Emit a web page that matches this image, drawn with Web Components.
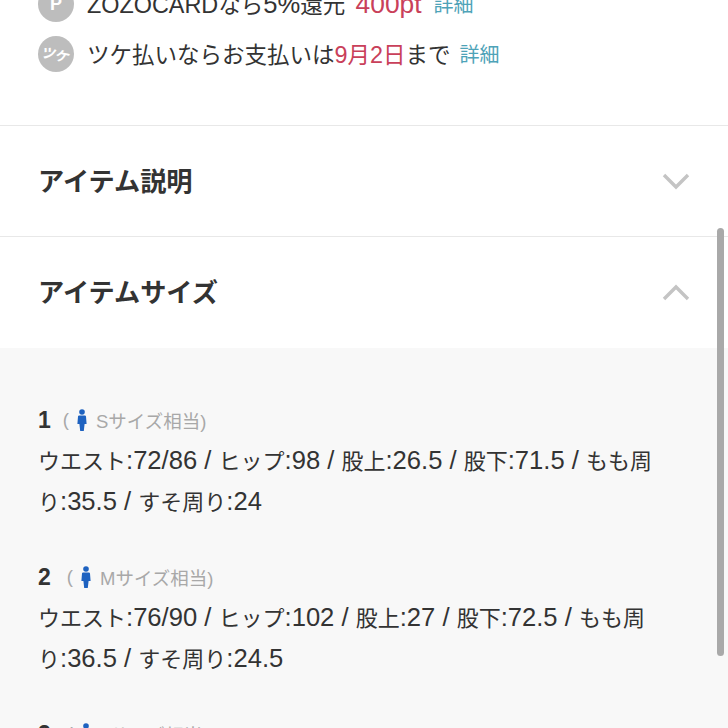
<!DOCTYPE html>
<html lang="ja">
<head>
<meta charset="utf-8">
<style>
  html, body { margin: 0; height: 728px; overflow: hidden; background: #fff; }
  body { font-family: "Liberation Sans", "Noto Sans CJK JP", sans-serif; color: #333; }
  .en { font-size: 25.6px; line-height: 1; }
  .card { font-size: 23.4px; line-height: 1; }
  .pt { font-size: 26.4px; line-height: 1; margin: 0 3px 0 4px; }
  .red { color: #c9405a; }
</style>
</head>
<body>
<item-page>
  <note-row slot="notes" mark="P"><span><span class="card">ZOZOCARD</span>なら<span class="en">5%</span>還元 <span class="pt red">400pt</span></span></note-row>
  <note-row slot="notes" mark="ツケ"><span>ツケ払いならお支払いは<span class="red"><span class="card">9</span>月<span class="card">2</span>日</span>まで</span></note-row>
  <accordion-row slot="rows" title="アイテム説明"></accordion-row>
  <accordion-row slot="rows" title="アイテムサイズ" open></accordion-row>
  <size-entry slot="sizes" num="1" label="Sサイズ相当)">ウエスト<span class="en">:72/86 / </span>ヒップ<span class="en">:98 / </span>股上<span class="en">:26.5 / </span>股下<span class="en">:71.5 / </span>もも周り<span class="en">:35.5 / </span>すそ周り<span class="en">:24</span></size-entry>
  <size-entry slot="sizes" num="2" label="Mサイズ相当)">ウエスト<span class="en">:76/90 / </span>ヒップ<span class="en">:102 / </span>股上<span class="en">:27 / </span>股下<span class="en">:72.5 / </span>もも周り<span class="en">:36.5 / </span>すそ周り<span class="en">:24.5</span></size-entry>
  <size-entry slot="sizes" num="3" label="Lサイズ相当)">ウエスト<span class="en">:80/94 / </span>ヒップ<span class="en">:106 / </span>股上<span class="en">:27.5 / </span>股下<span class="en">:73.5 / </span>もも周り<span class="en">:37.5 / </span>すそ周り<span class="en">:25</span></size-entry>
</item-page>

<script>
class ItemPage extends HTMLElement{

    constructor(){
        super();
        this.shadowDOM = this.attachShadow({mode: "open"});
    }

    connectedCallback(){
        this.shadowDOM.innerHTML = `
        <style>
            :host { display: block; position: relative; height: 728px; overflow: hidden; }
            .notes { margin-top: -14px; padding: 0 38px 39px; }
            .sizes { background: #f8f8f8; padding: 58px 38px 0; display: flex; flex-direction: column; gap: 40px; }
            .bar { position: absolute; left: 717px; top: 228px; width: 7px; height: 428px; border-radius: 4px; background: #a9a9a9; }
        </style>
        <div class="notes"><slot name="notes"></slot></div>
        <slot name="rows"></slot>
        <div class="sizes"><slot name="sizes"></slot></div>
        <div class="bar"></div>`;
    }
}

class NoteRow extends HTMLElement{

    constructor(){
        super();
        this.shadowDOM = this.attachShadow({mode: "open"});
    }

    connectedCallback(){
        const mark = this.getAttribute("mark");
        const small = mark.length > 1;
        this.shadowDOM.innerHTML = `
        <style>
            :host { display: flex; align-items: center; height: 36px; font-size: 22.5px; color: #333; margin-bottom: 14px; }
            .mark {
                width: 36px; height: 36px; border-radius: 50%; background: #bdbdbd; color: #fff;
                display: flex; align-items: center; justify-content: center; flex: none;
                margin-right: 13px; font-weight: 700; font-size: ${small ? 14 : 18}px;
            }
            .mark span { display: block; ${small ? "transform: rotate(12deg) skewX(-10deg);" : ""} }
            .text { padding-bottom: 2px; }
            .more { color: #4ea3b8; margin-left: 9px; font-size: 20px; padding-bottom: 2px; }
        </style>
        <span class="mark"><span>${mark}</span></span>
        <span class="text"><slot></slot></span>
        <span class="more">詳細</span>`;
    }
}

class AccordionRow extends HTMLElement{

    constructor(){
        super();
        this.shadowDOM = this.attachShadow({mode: "open"});
    }

    connectedCallback(){
        const points = this.hasAttribute("open") ? "2,15 14,3 26,15" : "2,3 14,15 26,3";
        this.shadowDOM.innerHTML = `
        <style>
            :host {
                display: flex; align-items: center; justify-content: space-between;
                box-sizing: border-box; height: 111px; padding: 0 38px;
                border-top: 1px solid #e8e8e8; background: #fff;
            }
            :host([open]) { height: 112px; }
            h2 { margin: 0 0 3px; font-size: 26.2px; font-weight: 700; color: #333; }
            svg { display: block; }
        </style>
        <h2>${this.getAttribute("title")}</h2>
        <svg width="28" height="18" viewBox="0 0 28 18" fill="none" stroke="#c4c4c4" stroke-width="3.4"><polyline points="${points}"/></svg>`;
    }
}

class SizeEntry extends HTMLElement{

    constructor(){
        super();
        this.shadowDOM = this.attachShadow({mode: "open"});
    }

    connectedCallback(){
        const num = this.getAttribute("num");
        this.shadowDOM.innerHTML = `
        <style>
            :host { display: block; color: #333; }
            .head { display: flex; align-items: center; height: 28px; margin-bottom: 7px; }
            .num { font-size: 23px; font-weight: 700; margin-right: ${num == "1" ? 12 : 16}px; }
            .hint { display: flex; align-items: center; gap: 7px; font-size: 18.5px; color: #a8a8a8; }
            svg { display: block; margin-right: 1px; }
            .body { font-size: 22px; line-height: 41px; width: 622px; }
        </style>
        <div class="head">
            <span class="num">${num}</span>
            <span class="hint">(
                <svg width="12" height="22" viewBox="0 0 12 22" fill="#1e62c0"><circle cx="6" cy="3" r="2.8"/><path d="M2 7.5q0-1 1.2-1h5.6q1.2 0 1.2 1l.6 7.5h-2l-.8 7H4.2l-.8-7h-2z"/></svg>
                <span>${this.getAttribute("label")}</span>
            </span>
        </div>
        <div class="body"><slot></slot></div>`;
    }
}

customElements.define("item-page", ItemPage);
customElements.define("note-row", NoteRow);
customElements.define("accordion-row", AccordionRow);
customElements.define("size-entry", SizeEntry);
</script>
</body>
</html>
